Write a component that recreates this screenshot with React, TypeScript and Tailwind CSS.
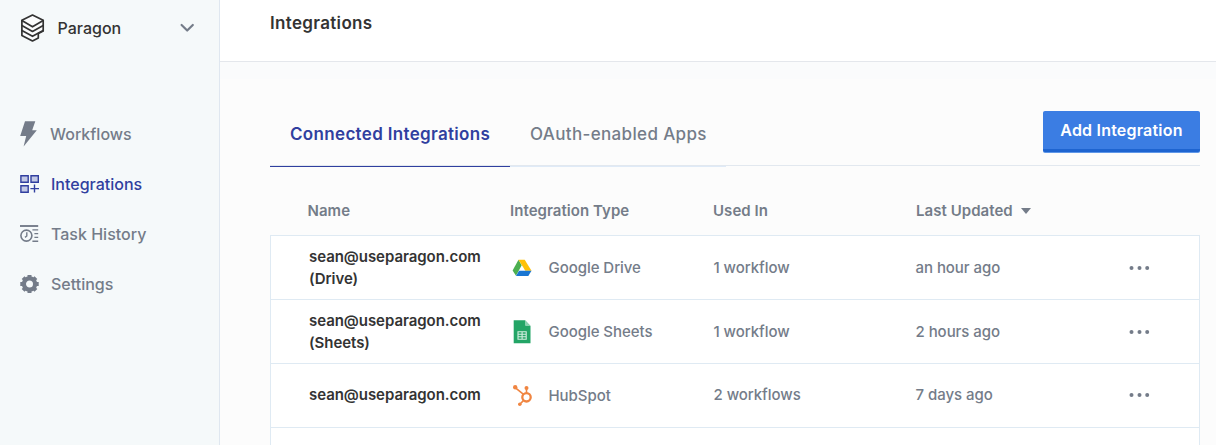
import type { ReactNode } from "react";

function Logo() {
  return (
    <svg className="h-[30px] w-[26px] shrink-0" viewBox="0 0 26 30" fill="none" stroke="#333" strokeWidth="1.7" strokeLinejoin="round" strokeLinecap="round">
      <path d="M12.5 2 23.2 7.3v10.6L18.3 20.4v4.5L12.5 28 1.9 22.4V7.3Z" fill="#fbfcfd" />
      <path d="M1.9 7.6 12.5 13.8 23.2 7.6" />
      <path d="M1.9 12.6 12.5 18.5 23.2 12.6" />
      <path d="M1.9 17.4 12.5 23.3 23.2 17.4" />
    </svg>
  );
}

function BoltIcon() {
  return (
    <svg className="h-[26px] w-[18px]" viewBox="0 0 18 26" fill="#747c89">
      <path d="M5 .2h10.3L12.2 9.3h4.6L3.6 25.6 6.2 14.9H.2Z" />
    </svg>
  );
}

function GridIcon() {
  return (
    <svg className="h-5 w-5" viewBox="0 0 20 20" fill="#c2c9e5" stroke="#303f9f" strokeWidth="1.4">
      <path d="M.9 1.7h7.3v6.6H.9zM11 1.7h7.3v6.6H11zM.9 11.7h7.3v6.6H.9z" />
      <path d="M14.5 10.5v8M10.4 14.6h8.6" fill="none" />
    </svg>
  );
}

function HistoryIcon() {
  return (
    <svg className="h-5 w-5" viewBox="0 0 20 20" fill="none" stroke="#747c89" strokeWidth="1.4">
      <path d="M0 2h18.2" strokeWidth="1.9" />
      <circle cx="6.4" cy="11.6" r="5.5" strokeWidth="1.6" />
      <path d="M6.8 8.3v3.7L5 13.4M12.4 5.9h5.8M14.4 9.6h3.8M14.4 13.4h3.8M12.4 17.2h5.8" />
    </svg>
  );
}

function GearIcon() {
  return (
    <svg className="h-5 w-5" viewBox="0 0 20 20" fill="none" stroke="#747c89">
      <circle cx="9.5" cy="10" r="5.6" strokeWidth="4.2" />
      <path d="M9.5 1v3M9.5 16v3M.3 10h3M15.7 10h3M3.1 3.6l2 2M13.9 14.4l2 2M15.9 3.6l-2 2M5.1 14.4l-2 2" strokeWidth="4" />
    </svg>
  );
}

function DriveIcon() {
  return (
    <svg className="ml-[0.5px] h-[18px] w-5" viewBox="0 0 20 18">
      <path d="M6.5.8 9.7 6.3 4 16.8.6 11.4Z" fill="#4caf50" />
      <path d="M6.5.8h6.2l6.8 10.9h-6.2Z" fill="#ffc107" />
      <path d="M7 11.7h12.5L16.3 17H4Z" fill="#1976d2" />
    </svg>
  );
}

function SheetsIcon() {
  return (
    <svg className="ml-[1.5px] h-6 w-[18px]" viewBox="0 0 18 24">
      <path d="M.7.3H12l5.5 5.6v17.3H.7Z" fill="#23a566" />
      <path d="M12 .3v4.6q0 1 1 1h4.5Z" fill="#8ed1b1" />
      <path d="M5 11.7h8.2v7.5H5zM9.1 11.7v7.5M5 14.2h8.2M5 16.7h8.2" fill="none" stroke="#d3eee0" strokeWidth="1.1" />
    </svg>
  );
}

function HubSpotIcon() {
  return (
    <svg className="h-6 w-5" viewBox="0 0 20 24" fill="none" stroke="#f08541">
      <circle cx="14.5" cy="13.3" r="4.2" strokeWidth="2.3" />
      <path d="M14.5 9V4.2M11.2 10.2 3.2 3.6M11.4 16.6 7.8 20.2" strokeWidth="1.6" />
      <g fill="#f08541" stroke="none">
        <circle cx="3.2" cy="3.2" r="2.2" />
        <circle cx="14.5" cy="4" r="2" />
        <circle cx="7.8" cy="20.2" r="1.8" />
      </g>
    </svg>
  );
}

const nav: { label: string; icon: ReactNode; active?: boolean }[] = [
  { label: "Workflows", icon: <BoltIcon /> },
  { label: "Integrations", icon: <GridIcon />, active: true },
  { label: "Task History", icon: <HistoryIcon /> },
  { label: "Settings", icon: <GearIcon /> },
];

const rows: { name: string[]; icon: ReactNode; type: string; used: string; updated: string }[] = [
  { name: ["sean@useparagon.com", "(Drive)"], icon: <DriveIcon />, type: "Google Drive", used: "1 workflow", updated: "an hour ago" },
  { name: ["sean@useparagon.com", "(Sheets)"], icon: <SheetsIcon />, type: "Google Sheets", used: "1 workflow", updated: "2 hours ago" },
  { name: ["sean@useparagon.com"], icon: <HubSpotIcon />, type: "HubSpot", used: "2 workflows", updated: "7 days ago" },
];

export default function App() {
  return (
    <div className="flex h-[445px] w-[1216px] overflow-hidden bg-[#fcfcfc] font-['Inter',sans-serif] text-[#747c89]">
      <aside className="w-[220px] shrink-0 border-r border-[#dfe7f0] bg-[#f5f9fa]">
        <div className="flex h-14 items-center pl-5">
          <Logo />
          <span className="ml-[11.5px] w-[122.5px] text-[16px] font-medium text-[#333]">Paragon</span>
          <svg className="h-3 w-4" viewBox="0 0 16 12" fill="none" stroke="#747c89" strokeWidth="2.2" strokeLinecap="round" strokeLinejoin="round">
            <path d="M1.6 3 7.2 8.5 12.8 3" />
          </svg>
        </div>
        <nav className="mt-[53px]">
          {nav.map((item) => (
            <div key={item.label} className={`flex h-[50px] items-center pl-5 text-[16px] font-medium ${item.active ? "text-[#303f9f]" : ""}`}>
              <span className={`flex items-center ${item.label === "Workflows" ? "w-[30px]" : "w-[31px]"}`}>{item.icon}</span>
              {item.label}
            </div>
          ))}
        </nav>
      </aside>
      <main className="min-w-0 flex-1">
        <header className="h-[62px] border-b border-[#e4e7ec] bg-white pt-[11px] pl-[50px] text-[17px] leading-6 font-semibold tracking-[0.33px] text-[#333]">
          Integrations
        </header>
        <div className="h-[17px] bg-[#fafbfc]" />
        <div className="mr-4 ml-[50px]">
          <div className="flex h-[87px] justify-between border-b border-[#e2e8ef]">
            <div className="flex h-[88px] pt-[22px] text-[17px]">
              <div className="w-[240px] border-b border-[#303f9f] pt-[21px] pl-5 font-semibold tracking-[0.33px] text-[#303f9f]">Connected Integrations</div>
              <div className="w-[216px] border-b border-[#dfeaf7] pt-[21px] pl-5 font-medium tracking-[0.35px]">OAuth-enabled Apps</div>
            </div>
            <button className="mt-8 h-[41px] w-[157px] rounded-[2px] border-b-[3px] border-[#1e64d0] bg-[#3b7de3] text-[16px] font-semibold tracking-[0.2px] text-white shadow-[0_1px_0_#5f97e8]">Add Integration</button>
          </div>
          <div className="flex h-[69px] items-center pt-[22px] pl-[37.5px] text-[15px] font-semibold tracking-[0.05px]">
            <span className="w-[202.5px]">Name</span>
            <span className="w-[203px]">Integration Type</span>
            <span className="w-[203px]">Used In</span>
            <span className="flex items-center gap-2">
              Last Updated
              <svg className="mb-[2px] h-[6px] w-[10px]" viewBox="0 0 10 6" fill="#747c89"><path d="M0 0h10L5 6Z" /></svg>
            </span>
          </div>
          <div className="h-[230px] border border-[#dfeaf3] bg-white">
            {rows.map((row) => (
              <div key={row.name.join(" ")} className={`flex h-16 items-center border-b border-[#dfeaf3] pl-[38px] text-[15px] font-medium tracking-[-0.05px] ${row.name.length === 1 ? "pb-[2px]" : ""}`}>
                <div className="w-[202.5px] text-[15px] leading-[22px] font-semibold text-[#333]">
                  {row.name.map((line) => <div key={line}>{line}</div>)}
                </div>
                <div className={`flex w-[202px] items-center ${row.name.length === 1 ? "pt-[2px]" : ""}`}>
                  <span className="flex w-[37px] items-center">{row.icon}</span>
                  <span className="pt-[2px]">{row.type}</span>
                </div>
                <span className="w-[202px] pt-[2px]">{row.used}</span>
                <span className="w-[213.5px] pt-[2px]">{row.updated}</span>
                <svg className="h-[6px] w-[22px]" viewBox="0 0 22 6" fill="#747c89">
                  <circle cx="2.5" cy="3" r="2" /><circle cx="10.5" cy="3" r="2" /><circle cx="18.2" cy="3" r="2" />
                </svg>
              </div>
            ))}
          </div>
        </div>
      </main>
    </div>
  );
}
